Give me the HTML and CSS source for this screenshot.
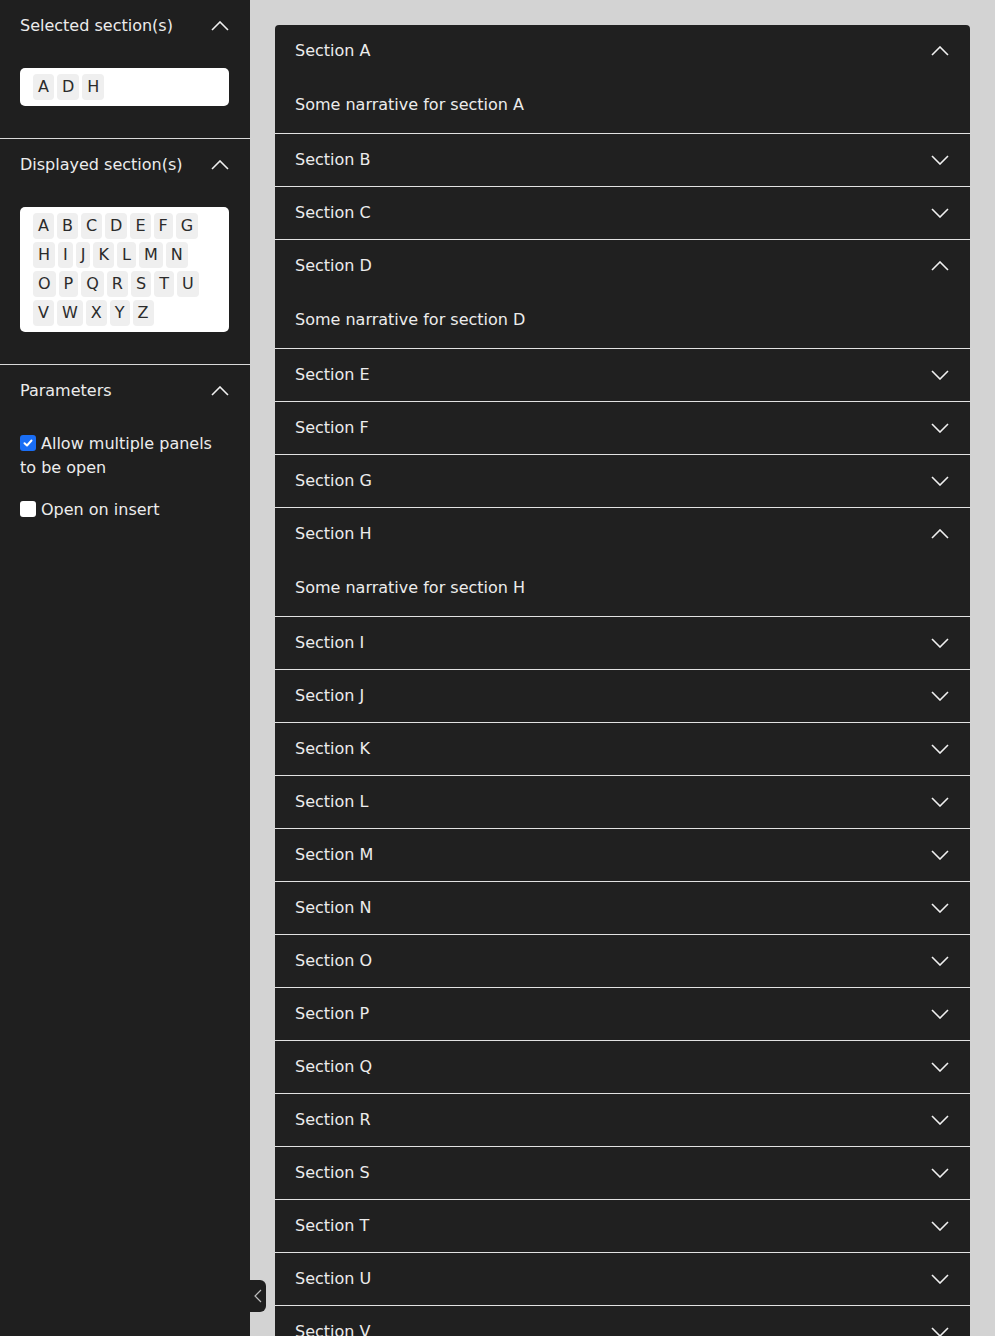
FILE: index.html
```html
<!DOCTYPE html>
<html lang="en">
<head>
<meta charset="utf-8">
<title>Accordion demo</title>
<link rel="stylesheet" href="styles.css">
</head>
<body>
<aside class="sidebar">
  <section class="side-section">
    <div class="side-header">
      <span>Selected section(s)</span>
      <svg class="side-chev" viewBox="0 0 18 10" width="18" height="10"><polyline points="1,9 9,1 17,9" fill="none" stroke="currentColor" stroke-width="1.6"/></svg>
    </div>
    <div class="chip-box">
      <span class="chip">A</span><span class="chip">D</span><span class="chip">H</span>
    </div>
  </section>
  <section class="side-section">
    <div class="side-header">
      <span>Displayed section(s)</span>
      <svg class="side-chev" viewBox="0 0 18 10" width="18" height="10"><polyline points="1,9 9,1 17,9" fill="none" stroke="currentColor" stroke-width="1.6"/></svg>
    </div>
    <div class="chip-box">
      <span class="chip">A</span><span class="chip">B</span><span class="chip">C</span><span class="chip">D</span><span class="chip">E</span><span class="chip">F</span><span class="chip">G</span><span class="chip">H</span><span class="chip">I</span><span class="chip">J</span><span class="chip">K</span><span class="chip">L</span><span class="chip">M</span><span class="chip">N</span><span class="chip">O</span><span class="chip">P</span><span class="chip">Q</span><span class="chip">R</span><span class="chip">S</span><span class="chip">T</span><span class="chip">U</span><span class="chip">V</span><span class="chip">W</span><span class="chip">X</span><span class="chip">Y</span><span class="chip">Z</span>
    </div>
  </section>
  <section class="side-section params">
    <div class="side-header">
      <span>Parameters</span>
      <svg class="side-chev" viewBox="0 0 18 10" width="18" height="10"><polyline points="1,9 9,1 17,9" fill="none" stroke="currentColor" stroke-width="1.6"/></svg>
    </div>
    <label class="check"><span class="box checked"><svg viewBox="0 0 16 16" width="16" height="16"><polyline points="4.5,8.2 7,10.5 11.5,5.5" fill="none" stroke="#fff" stroke-width="2" stroke-linecap="round" stroke-linejoin="round"/></svg></span>Allow multiple panels to be open</label>
    <label class="check"><span class="box"></span>Open on insert</label>
  </section>
</aside>
<button class="collapse-toggle" aria-label="Collapse sidebar"><svg viewBox="0 0 8 14" width="8" height="14"><polyline points="7,1 1,7 7,13" fill="none" stroke="currentColor" stroke-width="1.2"/></svg></button>
<main class="main">
  <div class="accordion" id="acc"></div>
</main>
<script src="app.js"></script>
</body>
</html>
```
FILE: app.js
```js
(function () {
  var acc = document.getElementById('acc');
  var open = { A: true, D: true, H: true };
  var up = '<svg class="chev" viewBox="0 0 18 10" width="18" height="10"><polyline points="1,9 9,1 17,9" fill="none" stroke="currentColor" stroke-width="1.6"/></svg>';
  var down = '<svg class="chev" viewBox="0 0 18 10" width="18" height="10"><polyline points="1,1 9,9 17,1" fill="none" stroke="currentColor" stroke-width="1.6"/></svg>';
  var html = '';
  for (var i = 0; i < 26; i++) {
    var l = String.fromCharCode(65 + i);
    html += '<div class="acc-item">' +
      '<div class="acc-header"><span>Section ' + l + '</span>' + (open[l] ? up : down) + '</div>' +
      (open[l] ? '<div class="acc-body">Some narrative for section ' + l + '</div>' : '') +
      '</div>';
  }
  acc.innerHTML = html;
})();
```
FILE: styles.css
```css
html { scrollbar-width: none; }
html::-webkit-scrollbar { display: none; }
body {
  margin: 0;
  display: flex;
  align-items: stretch;
  background: #d3d3d3;
  font-family: "DejaVu Sans", "Liberation Sans", sans-serif;
  font-size: 16px;
  line-height: 24px;
  color: #e6e6e6;
}
.sidebar {
  width: 250px;
  flex: 0 0 250px;
  background: #1f1f1f;
  min-height: 100vh;
}
.side-section {
  padding: 14px 21px 32px 20px;
  border-bottom: 1px solid #d9d9d9;
}
.side-section.params { border-bottom: none; }
.side-header {
  display: flex;
  justify-content: space-between;
  align-items: center;
  height: 24px;
  color: #ececec;
}
.side-chev { color: #f0f0f0; margin-top: -1px; }
.chip-box {
  margin-top: 30px;
  background: #fff;
  border-radius: 5px;
  padding: 6px 20px 6px 13px;
  display: flex;
  flex-wrap: wrap;
  gap: 3px;
}
.chip {
  background: #efefef;
  color: #2b2b2b;
  border-radius: 4px;
  height: 26px;
  line-height: 26px;
  padding: 0 5px;
}
.params .side-header { margin-bottom: 29px; }
.check {
  display: block;
  color: #ececec;
  margin-bottom: 18px;
}
.box {
  display: inline-block;
  width: 16px;
  height: 16px;
  border-radius: 3px;
  background: #fff;
  vertical-align: -2px;
  margin-right: 5px;
}
.box.checked { background: #1a6ef5; }
.box svg { display: block; }
.collapse-toggle {
  position: fixed;
  left: 250px;
  bottom: 24px;
  width: 16px;
  height: 32px;
  padding: 0;
  border: none;
  background: #1f1f1f;
  border-radius: 0 6px 6px 0;
  color: #bdbdbd;
  display: flex;
  align-items: center;
  justify-content: center;
}
.main {
  flex: 1;
  padding: 25px;
}
.accordion {
  background: #202020;
  border-radius: 4px;
  overflow: hidden;
}
.acc-item { border-bottom: 1px solid #e2e2e2; }
.acc-header {
  display: flex;
  justify-content: space-between;
  align-items: center;
  height: 52px;
  padding: 0 21px 0 20px;
  color: #ececec;
}
.chev { color: #f0f0f0; }
.acc-body {
  padding: 16px 20px 16px 20px;
  color: #ececec;
}
```
